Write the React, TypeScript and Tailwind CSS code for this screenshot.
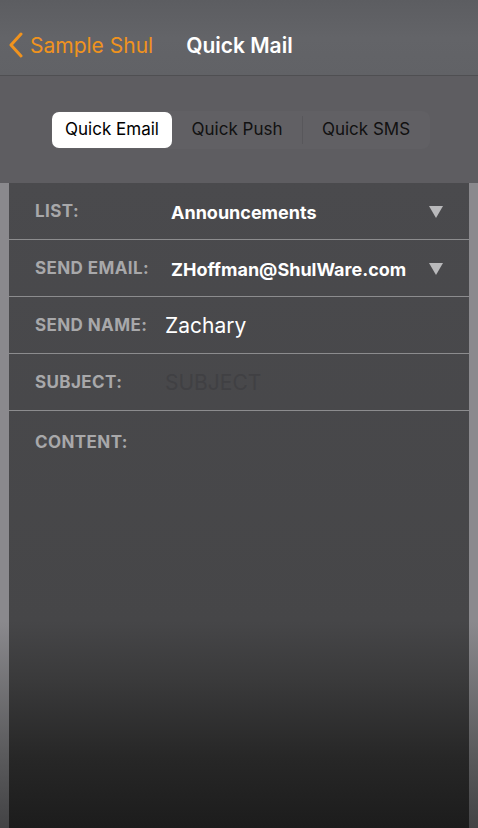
import React from "react";

const font = { fontFamily: "Inter, 'Liberation Sans', sans-serif" };

function Caret() {
  return (
    <svg width="14" height="12" viewBox="0 0 14 12" className="shrink-0">
      <path d="M0 0 H14 L7 12 Z" fill="#b9b9bb" />
    </svg>
  );
}

function Row({ label, children, caret }: { label: string; children?: React.ReactNode; caret?: boolean }) {
  return (
    <div className="h-[57px] flex items-center pl-[26px] pr-[26px] pt-[2px] border-b border-[#8c8c8e]">
      <span className="w-[136px] shrink-0 text-[17px] font-bold text-[#a8a8aa] tracking-[0.4px]">{label}</span>
      <div className="flex-1 min-w-0">{children}</div>
      {caret && <Caret />}
    </div>
  );
}

export default function App() {
  return (
    <div className="w-[478px] h-[828px] overflow-hidden flex flex-col bg-[#5e5d61]" style={font}>
      {/* nav bar */}
      <div className="h-[76px] shrink-0 flex items-end pb-[14px] bg-gradient-to-b from-[#5c5d61] via-[#636468] to-[#616266] border-b border-[#4f4f52]">
        <div className="flex items-center pl-[8px] gap-[7px]">
          <svg width="15" height="26" viewBox="0 0 15 26">
            <path d="M13 2 L3 13 L13 24" fill="none" stroke="#f0931e" strokeWidth="3" strokeLinecap="round" strokeLinejoin="round" />
          </svg>
          <span className="text-[21px] text-[#f0931e]">Sample Shul</span>
        </div>
        <span className="ml-[33px] text-[21px] font-semibold text-white">Quick Mail</span>
      </div>

      {/* segmented control */}
      <div className="h-[107px] shrink-0 flex items-center pl-[51px]">
        <div className="flex items-center h-[38px] w-[379px] rounded-[8px] bg-[#616064] p-[1px]">
          <div className="h-[36px] w-[120px] rounded-[7px] bg-white flex items-center justify-center text-[17px] text-black">Quick Email</div>
          <div className="h-full w-[130px] flex items-center justify-center text-[17px] text-[#111]">Quick Push</div>
          <div className="w-px h-[28px] bg-[#58575b]" />
          <div className="h-full flex-1 flex items-center justify-center text-[17px] text-[#111]">Quick SMS</div>
        </div>
      </div>

      {/* form */}
      <div className="flex-1 flex bg-[linear-gradient(to_bottom,#8a898d_0%,#8a898d_68%,#5c5c5e_88%,#434345_100%)]">
        <div className="w-[9px] shrink-0" />
        <div className="flex-1 flex flex-col bg-[linear-gradient(to_bottom,#4a4a4d_0%,#464648_68%,#3a3a3b_77%,#272727_89%,#1c1c1c_100%)]">
          <Row label="LIST:" caret>
            <span className="text-[18px] font-bold text-white">Announcements</span>
          </Row>
          <Row label="SEND EMAIL:" caret>
            <span className="text-[18px] font-bold text-white">ZHoffman@ShulWare.com</span>
          </Row>
          <Row label="SEND NAME:">
            <span className="text-[21px] text-white -ml-[6px]">Zachary</span>
          </Row>
          <Row label="SUBJECT:">
            <span className="text-[21px] text-[#404043] -ml-[6px]">SUBJECT</span>
          </Row>
          <div className="pl-[26px] pt-[19px]">
            <span className="text-[17px] font-bold text-[#a8a8aa] tracking-[0.4px]">CONTENT:</span>
          </div>
        </div>
        <div className="w-[9px] shrink-0" />
      </div>
    </div>
  );
}
